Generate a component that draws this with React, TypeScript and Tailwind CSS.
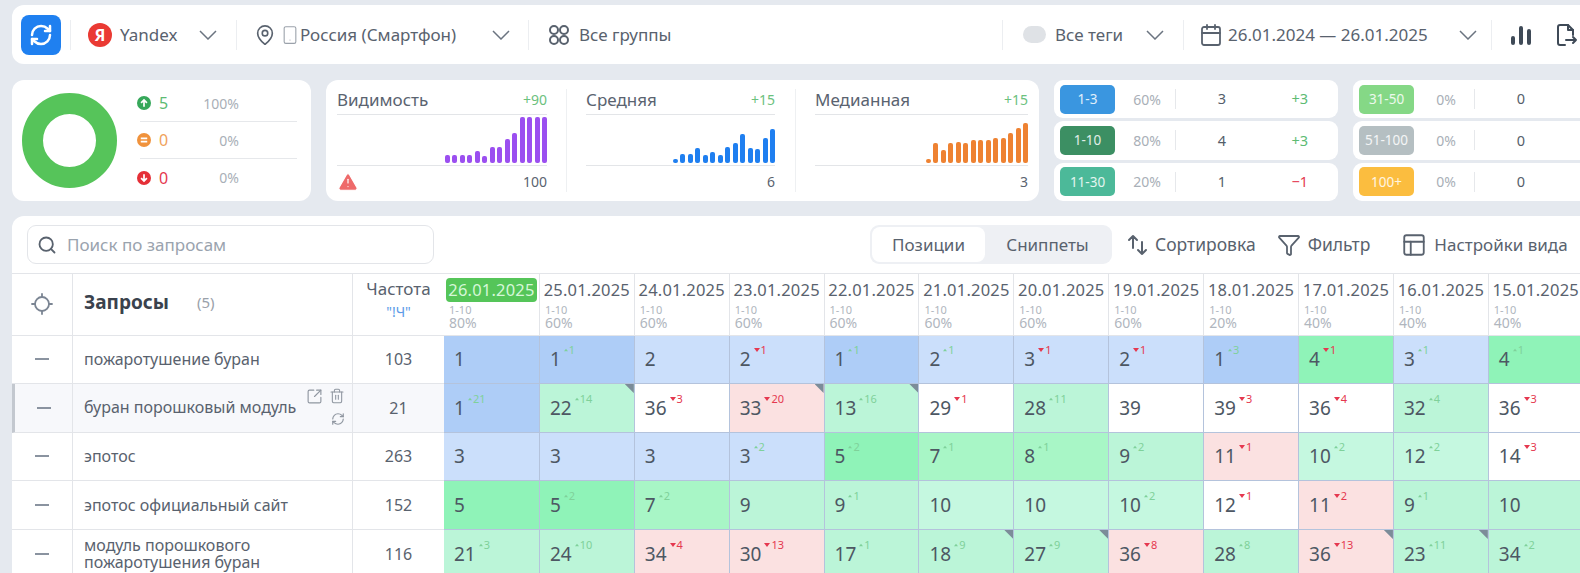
import React from 'react';
import {
  Calendar,
  Funnel,
  Locate,
  MapPin,
  PanelsTopLeft,
  RefreshCw,
  Search,
  Smartphone,
  SquareArrowOutUpRight,
  Trash2,
  TriangleAlert,
} from 'lucide-react';

type Tone = 'a' | 'b' | 'c' | 'd' | 'e' | 'f' | 'r' | 'w';
type Cell = { v: number; d?: number; t: Tone; mark?: boolean };

const tones: Record<Tone, string> = {
  a: 'bg-[#aecdf7]',
  b: 'bg-[#cbdffb]',
  c: 'bg-[#8ff3b8]',
  d: 'bg-[#a8f6c6]',
  e: 'bg-[#c5f8e0]',
  f: 'bg-[#bbf5d8]',
  r: 'bg-[#fbe1e1]',
  w: 'bg-white',
};

const dates = [
  { date: '26.01.2025', pct: '80%' },
  { date: '25.01.2025', pct: '60%' },
  { date: '24.01.2025', pct: '60%' },
  { date: '23.01.2025', pct: '60%' },
  { date: '22.01.2025', pct: '60%' },
  { date: '21.01.2025', pct: '60%' },
  { date: '20.01.2025', pct: '60%' },
  { date: '19.01.2025', pct: '60%' },
  { date: '18.01.2025', pct: '20%' },
  { date: '17.01.2025', pct: '40%' },
  { date: '16.01.2025', pct: '40%' },
  { date: '15.01.2025', pct: '40%' },
];

const rows: { name: React.ReactNode; freq: number; hover?: boolean; cells: Cell[] }[] = [
  {
    name: 'пожаротушение буран',
    freq: 103,
    cells: [
      { v: 1, t: 'a' },
      { v: 1, d: 1, t: 'a' },
      { v: 2, t: 'b' },
      { v: 2, d: -1, t: 'b' },
      { v: 1, d: 1, t: 'a' },
      { v: 2, d: 1, t: 'b' },
      { v: 3, d: -1, t: 'b' },
      { v: 2, d: -1, t: 'b' },
      { v: 1, d: 3, t: 'a' },
      { v: 4, d: -1, t: 'c' },
      { v: 3, d: 1, t: 'b' },
      { v: 4, d: 1, t: 'c' },
    ],
  },
  {
    name: 'буран порошковый модуль',
    freq: 21,
    hover: true,
    cells: [
      { v: 1, d: 21, t: 'a' },
      { v: 22, d: 14, t: 'f', mark: true },
      { v: 36, d: -3, t: 'w' },
      { v: 33, d: -20, t: 'r', mark: true },
      { v: 13, d: 16, t: 'f', mark: true },
      { v: 29, d: -1, t: 'w' },
      { v: 28, d: 11, t: 'f' },
      { v: 39, t: 'w' },
      { v: 39, d: -3, t: 'w' },
      { v: 36, d: -4, t: 'w' },
      { v: 32, d: 4, t: 'f' },
      { v: 36, d: -3, t: 'w' },
    ],
  },
  {
    name: 'эпотос',
    freq: 263,
    cells: [
      { v: 3, t: 'b' },
      { v: 3, t: 'b' },
      { v: 3, t: 'b' },
      { v: 3, d: 2, t: 'b' },
      { v: 5, d: 2, t: 'c' },
      { v: 7, d: 1, t: 'd' },
      { v: 8, d: 1, t: 'd' },
      { v: 9, d: 2, t: 'f' },
      { v: 11, d: -1, t: 'r' },
      { v: 10, d: 2, t: 'e' },
      { v: 12, d: 2, t: 'e' },
      { v: 14, d: -3, t: 'w' },
    ],
  },
  {
    name: 'эпотос официальный сайт',
    freq: 152,
    cells: [
      { v: 5, t: 'c' },
      { v: 5, d: 2, t: 'c' },
      { v: 7, d: 2, t: 'd' },
      { v: 9, t: 'f' },
      { v: 9, d: 1, t: 'f' },
      { v: 10, t: 'e' },
      { v: 10, t: 'e' },
      { v: 10, d: 2, t: 'e' },
      { v: 12, d: -1, t: 'w' },
      { v: 11, d: -2, t: 'r' },
      { v: 9, d: 1, t: 'f' },
      { v: 10, t: 'f' },
    ],
  },
  {
    name: (
      <>
        модуль порошкового
        <br />
        пожаротушения буран
      </>
    ),
    freq: 116,
    cells: [
      { v: 21, d: 3, t: 'f' },
      { v: 24, d: 10, t: 'f' },
      { v: 34, d: -4, t: 'r' },
      { v: 30, d: -13, t: 'r' },
      { v: 17, d: 1, t: 'f' },
      { v: 18, d: 9, t: 'f', mark: true },
      { v: 27, d: 9, t: 'f', mark: true },
      { v: 36, d: -8, t: 'r' },
      { v: 28, d: 8, t: 'f' },
      { v: 36, d: -13, t: 'r', mark: true },
      { v: 23, d: 11, t: 'f', mark: true },
      { v: 34, d: 2, t: 'f' },
    ],
  },
];

function Chevron({ className }: { className: string }) {
  return (
    <svg viewBox="0 0 18 10" className={`h-[10px] w-[18px] shrink-0 text-[#6b7480] ${className}`} fill="none" stroke="currentColor" strokeWidth="1.5">
      <path d="M1 1l8 8 8-8" />
    </svg>
  );
}

function Divider({ className }: { className: string }) {
  return <div className={`h-[30px] w-px shrink-0 bg-[#eceef1] ${className}`} />;
}

function StatusIcon({ kind }: { kind: 'up' | 'same' | 'down' }) {
  const color = kind === 'up' ? '#36a85a' : kind === 'same' ? '#f0923c' : '#e52f37';
  return (
    <svg viewBox="0 0 13 13" className="-ml-[3px] h-[14px] w-[14px] shrink-0">
      <circle cx="6.5" cy="6.5" r="6.5" fill={color} />
      {kind === 'up' && <path d="M6.5 10V4M3.8 6.4l2.7-2.7 2.7 2.7" fill="none" stroke="#fff" strokeWidth="1.6" />}
      {kind === 'same' && <path d="M3.5 5h6M3.5 8h6" fill="none" stroke="#fff" strokeWidth="1.5" />}
      {kind === 'down' && <path d="M6.5 3v6M3.8 6.6l2.7 2.7 2.7-2.7" fill="none" stroke="#fff" strokeWidth="1.6" />}
    </svg>
  );
}

function StatusRow({ kind, num, pct, color, last }: { kind: 'up' | 'same' | 'down'; num: number; pct: string; color: string; last?: boolean }) {
  return (
    <div className={`flex h-[37px] items-center ${last ? '' : 'border-b border-[#e6e8eb]'}`}>
      <StatusIcon kind={kind} />
      <span className={`ml-[8px] w-[20px] text-[16px] ${color}`}>{num}</span>
      <span className="w-[60px] text-right text-[14px] text-[#a9afb7]">{pct}</span>
    </div>
  );
}

function Spark({ title, delta, value, bars, color, width, alert }: { title: string; delta: string; value: string; bars: number[]; color: string; width: string; alert?: boolean }) {
  return (
    <div className={`flex flex-col ${width}`}>
      <div className="flex h-[35px] items-end justify-between border-b border-[#e3e5e8] pb-[2px]">
        <span className="text-[17px] text-[#5a6370]">{title}</span>
        <span className="text-[14px] leading-[24px] text-[#6cc17e]">{delta}</span>
      </div>
      <div className="flex h-[51px] items-end justify-end gap-[2.5px] border-b border-[#e3e5e8] pb-[2px]">
        {bars.map((h, i) => (
          <div key={i} className={`w-[5px] rounded-[2px] ${color}`} style={{ height: h }} />
        ))}
      </div>
      <div className="flex flex-1 items-center justify-between pb-[4px]">
        {alert ? <TriangleAlert className="h-[22px] w-[22px] fill-[#ee6a6a] text-white" strokeWidth={1.3} /> : <span />}
        <span className="text-[14px] text-[#5a6370]">{value}</span>
      </div>
    </div>
  );
}

function StatRow({ label, bg, pct, value, delta, deltaColor, pctWidth }: { label: string; bg: string; pct: string; value: string; delta?: string; deltaColor?: string; pctWidth: string }) {
  return (
    <div className="flex h-[38.3px] items-center rounded-[9px] bg-white pl-[6px]">
      <span className={`flex h-[29px] w-[55px] shrink-0 items-center justify-center rounded-[5px] text-[13.5px] text-white/85 ${bg}`}>{label}</span>
      <span className={`text-right text-[14px] text-[#a9afb7] ${pctWidth}`}>{pct}</span>
      <div className="h-[20px] w-px bg-[#e6e8eb]" />
      <span className="w-[92px] text-center text-[14.5px] text-[#555e6a]">{value}</span>
      {delta && <span className={`w-[40px] text-right text-[14.5px] ${deltaColor}`}>{delta}</span>}
    </div>
  );
}

function Delta({ d }: { d: number }) {
  const up = d > 0;
  return (
    <span className={`-mt-[2px] ml-[3px] flex items-center gap-[1px] self-start text-[11px] leading-[12px] ${up ? 'text-[#7fd19a]' : 'text-[#e5384f]'}`}>
      <svg viewBox="0 0 6 4" className={up ? 'h-[4px] w-[4px]' : 'h-[4px] w-[6px]'} fill="currentColor">
        <path d={up ? 'M3 0l3 4H0z' : 'M0 0h6L3 4z'} />
      </svg>
      {Math.abs(d)}
    </span>
  );
}

export default function App() {
  return (
    <div className="flex h-[573px] w-[1580px] flex-col overflow-hidden bg-[#e5e9ef] pl-3 pt-[5px] font-['Noto_Sans','Open_Sans',sans-serif]">
      {/* top filters */}
      <div className="flex h-[59px] shrink-0 items-center rounded-l-[12px] bg-white text-[17px] text-[#59626e]">
        <button className="ml-[9px] flex h-[40px] w-[40px] shrink-0 items-center justify-center rounded-[8px] bg-[#1f80f0]">
          <RefreshCw className="h-[24px] w-[24px] text-white" strokeWidth={2.5} />
        </button>
        <Divider className="ml-[9px]" />
        <span className="ml-[17px] flex h-[24px] w-[24px] shrink-0 items-center justify-center rounded-full bg-[#ea3a33] text-[16px] font-bold text-white">Я</span>
        <span className="ml-[8px] w-[58px]">Yandex</span>
        <Chevron className="ml-[21px]" />
        <Divider className="ml-[19px]" />
        <MapPin className="ml-[17px] h-[22px] w-[22px] shrink-0" strokeWidth={1.8} />
        <Smartphone className="ml-[4px] h-[20px] w-[20px] shrink-0 text-[#9aa1aa]" strokeWidth={1.3} />
        <span className="w-[158px] whitespace-nowrap">Россия (Смартфон)</span>
        <Chevron className="ml-[34px]" />
        <Divider className="ml-[18px]" />
        <svg viewBox="0 0 22 22" className="ml-[19px] h-[22px] w-[22px] shrink-0" fill="none" stroke="currentColor" strokeWidth="2">
          <circle cx="6" cy="6" r="4" />
          <circle cx="16" cy="6" r="4" />
          <circle cx="6" cy="16" r="4" />
          <circle cx="16" cy="16" r="4" />
        </svg>
        <span className="ml-[9px] w-[92px] whitespace-nowrap">Все группы</span>
        <Divider className="ml-[331px]" />
        <span className="ml-[20px] h-[17px] w-[23px] shrink-0 rounded-full bg-[#dfe2e6]" />
        <span className="ml-[9px] w-[70px] whitespace-nowrap">Все теги</span>
        <Chevron className="ml-[21px]" />
        <Divider className="ml-[19px]" />
        <Calendar className="ml-[15px] h-[24px] w-[24px] shrink-0" strokeWidth={1.8} />
        <span className="ml-[5px] w-[202px] whitespace-nowrap">26.01.2024 — 26.01.2025</span>
        <Chevron className="ml-[29px]" />
        <Divider className="ml-[14px]" />
        <svg viewBox="0 0 22 22" className="ml-[18px] h-[24px] w-[22px] shrink-0 text-[#3f4a57]" fill="none" stroke="currentColor" strokeWidth="4" strokeLinecap="round">
          <path d="M3 19v-5M11 19V4M19 19V7" />
        </svg>
        <svg viewBox="0 0 24 24" className="ml-[22px] h-[24px] w-[24px] shrink-0 text-[#3f4a57]" fill="none" stroke="currentColor" strokeWidth="2" strokeLinecap="round" strokeLinejoin="round">
          <path d="M11 22H6a2 2 0 0 1-2-2V4a2 2 0 0 1 2-2h8l5 5v5" />
          <path d="M14 2v5h5M12 17h10M19 14l3 3-3 3" />
        </svg>
      </div>

      {/* summary cards */}
      <div className="mt-[16px] flex h-[121px] shrink-0 gap-[15px]">
        <div className="flex w-[299px] shrink-0 items-center rounded-[12px] bg-white pl-[10px]">
          <svg viewBox="0 0 95 95" className="h-[95px] w-[95px] shrink-0">
            <circle cx="47.5" cy="47.5" r="37" fill="none" stroke="#56c45a" strokeWidth="21" />
          </svg>
          <div className="ml-[23px] w-[157px]">
            <StatusRow kind="up" num={5} pct="100%" color="text-[#5dbb73]" />
            <StatusRow kind="same" num={0} pct="0%" color="text-[#f0a25c]" />
            <StatusRow kind="down" num={0} pct="0%" color="text-[#e5384f]" last />
          </div>
        </div>

        <div className="flex w-[713px] shrink-0 rounded-[12px] bg-white pl-[11px]">
          <Spark title="Видимость" delta="+90" value="100" color="bg-[#9b4ff0]" width="w-[210px]" alert bars={[8, 8, 8, 8, 12, 7, 16, 16, 24, 30, 46, 46, 46, 46]} />
          <div className="mx-[19px] my-[9px] w-px bg-[#eef0f2]" />
          <Spark title="Средняя" delta="+15" value="6" color="bg-[#1f7ff0]" width="w-[189px]" bars={[4, 9, 9, 15, 8, 11, 8, 16, 20, 29, 15, 14, 25, 34]} />
          <div className="mx-[19.5px] my-[9px] w-px bg-[#eef0f2]" />
          <Spark title="Медианная" delta="+15" value="3" color="bg-[#ee8232]" width="w-[213px]" bars={[4, 20, 13, 20, 21, 20, 23, 23, 23, 25, 25, 30, 35, 40]} />
        </div>

        <div className="flex w-[284px] shrink-0 flex-col gap-[3px]">
          <StatRow label="1-3" bg="bg-[#3a96e0]" pct="60%" value="3" delta="+3" deltaColor="text-[#5dbb73]" pctWidth="w-[46px] mr-[14px]" />
          <StatRow label="1-10" bg="bg-[#3c8f63]" pct="80%" value="4" delta="+3" deltaColor="text-[#5dbb73]" pctWidth="w-[46px] mr-[14px]" />
          <StatRow label="11-30" bg="bg-[#4cb999]" pct="20%" value="1" delta="−1" deltaColor="text-[#e5384f]" pctWidth="w-[46px] mr-[14px]" />
        </div>

        <div className="flex w-[240px] shrink-0 flex-col gap-[3px]">
          <StatRow label="31-50" bg="bg-[#85d886]" pct="0%" value="0" pctWidth="w-[42px] mr-[18px]" />
          <StatRow label="51-100" bg="bg-[#b5bfc2]" pct="0%" value="0" pctWidth="w-[42px] mr-[18px]" />
          <StatRow label="100+" bg="bg-[#fbbd3f]" pct="0%" value="0" pctWidth="w-[42px] mr-[18px]" />
        </div>
      </div>

      {/* positions table */}
      <div className="mt-[15px] flex-1 overflow-hidden rounded-tl-[12px] bg-white">
        <div className="flex h-[57px] items-center text-[17px] text-[#59626e]">
          <div className="ml-[15px] flex h-[39px] w-[407px] shrink-0 items-center rounded-[9px] border border-[#e3e5e9] pl-[9px]">
            <Search className="h-[20px] w-[20px] shrink-0 text-[#59626e]" strokeWidth={2.2} />
            <input placeholder="Поиск по запросам" className="ml-[10px] flex-1 bg-transparent text-[17px] outline-none placeholder:text-[#9aa3ae]" />
          </div>
          <div className="ml-[436px] flex h-[39px] w-[242px] shrink-0 rounded-[9px] bg-[#eef0f4] p-[2px]">
            <span className="flex w-[113px] items-center justify-center rounded-[8px] bg-white">Позиции</span>
            <span className="flex flex-1 items-center justify-center">Сниппеты</span>
          </div>
          <svg viewBox="0 0 24 24" className="ml-[14px] h-[24px] w-[24px] shrink-0" fill="none" stroke="currentColor" strokeWidth="2" strokeLinecap="round" strokeLinejoin="round">
            <path d="M7 15V3M3 7l4-4 4 4M16 9v12M12 17l4 4 4-4" />
          </svg>
          <span className="ml-[5px] whitespace-nowrap text-[17.5px]">Сортировка</span>
          <Funnel className="ml-[21px] h-[24px] w-[24px] shrink-0" strokeWidth={1.8} />
          <span className="ml-[7px] whitespace-nowrap text-[17.5px]">Фильтр</span>
          <PanelsTopLeft className="ml-[31px] h-[26px] w-[26px] shrink-0" strokeWidth={1.7} />
          <span className="ml-[7px] whitespace-nowrap">Настройки вида</span>
        </div>

        <div className="grid grid-cols-[60px_280px_92px_repeat(12,94.9px)] grid-rows-[61.5px_repeat(5,48.6px)] border-t border-[#e3e5e9]">
          <div className="flex items-center justify-center border-b border-[#e3e5e9]">
            <Locate className="h-[24px] w-[24px] text-[#7b8593]" strokeWidth={1.8} />
          </div>
          <div className="flex items-center border-b border-l border-[#e3e5e9] pb-[4px] pl-[11px]">
            <span className="text-[19px] font-bold text-[#3a424d]">Запросы</span>
            <span className="ml-[28px] text-[15px] text-[#9aa1aa]">(5)</span>
          </div>
          <div className="flex flex-col items-center border-b border-l border-[#e3e5e9] pt-[3px]">
            <span className="text-[17px] leading-[24px] text-[#59626e]">Частота</span>
            <span className="mt-[2px] text-[14px] leading-[18px] text-[#5b9be8]">"!Ч"</span>
          </div>
          {dates.map((d, i) => (
            <div key={d.date} className={`border-b border-[#e3e5e9] pt-[4px] ${i > 0 ? 'border-l' : ''}`}>
              <div className={`flex h-[24px] items-center justify-center whitespace-nowrap text-[16.5px] tracking-[0.2px] ${i === 0 ? 'mx-[2px] rounded-[4px] bg-[#55c559] text-[#d5f7d8]' : 'text-[#59626e]'}`}>
                {d.date}
              </div>
              <div className="pl-[5px] pt-[2px] text-[#b0b6be]">
                <div className="text-[11px] leading-[12px]">1-10</div>
                <div className="text-[14px] leading-[13px]">{d.pct}</div>
              </div>
            </div>
          ))}

          {rows.map((row, r) => (
            <React.Fragment key={r}>
              <div className={`flex items-center justify-center border-b border-[#e3e5e9] ${row.hover ? 'border-l-[3px] border-l-[#c3c8cf] bg-[#f7f8fb]' : ''}`}>
                <div className="h-[2px] w-[14px] bg-[#8a93a0]" />
              </div>
              <div className={`relative flex items-center border-b border-l border-[#e3e5e9] pl-[11px] text-[16px] leading-[17px] text-[#59626e] ${row.hover ? 'bg-[#f7f8fb]' : ''}`}>
                <span className="whitespace-nowrap">{row.name}</span>
                {row.hover && (
                  <div className="absolute right-[7px] top-[4px] flex w-[40px] flex-wrap justify-end gap-x-[6px] gap-y-[7px] text-[#8f96a0]">
                    <SquareArrowOutUpRight className="h-[17px] w-[17px]" strokeWidth={1.6} />
                    <Trash2 className="h-[16px] w-[16px]" strokeWidth={1.6} />
                    <RefreshCw className="h-[14px] w-[14px]" strokeWidth={2} />
                  </div>
                )}
              </div>
              <div className={`flex items-center justify-center border-b border-l border-[#e3e5e9] text-[16px] text-[#59626e] ${row.hover ? 'bg-[#f7f8fb]' : ''}`}>{row.freq}</div>
              {row.cells.map((c, i) => (
                <div key={i} className={`relative flex items-center border-b border-[#b4c3dc] pl-[10px] ${i > 0 ? 'border-l' : ''} ${tones[c.t]}`}>
                  <div className="flex items-center">
                    <span className="text-[19px] leading-[26px] text-[#4d5763]">{c.v}</span>
                    {c.d !== undefined && <Delta d={c.d} />}
                  </div>
                  {c.mark && <div className="absolute right-0 top-0 h-[9px] w-[9px] bg-[#7c8c99] [clip-path:polygon(100%_0,0_0,100%_100%)]" />}
                </div>
              ))}
            </React.Fragment>
          ))}
        </div>
      </div>
    </div>
  );
}
